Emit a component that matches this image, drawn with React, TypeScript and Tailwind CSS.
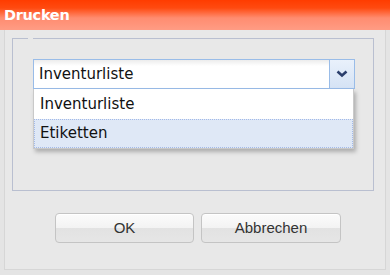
import React from "react";

export default function App() {
  return (
    <div className="w-[390px] h-[275px] bg-[#e4e4e4] overflow-hidden relative">
      {/* Title bar */}
      <div className="h-[30px] bg-[linear-gradient(to_bottom,#ff3c00_0px,#ff4a10_8px,#ff8c70_18px,#ff9c84_30px)] flex items-center pl-[4px] pt-[1px]">
        <span className="text-white font-bold text-[14.5px] leading-none font-['DejaVu_Sans',sans-serif] tracking-[-0.3px]">
          Drucken
        </span>
      </div>

      {/* Window body */}
      <div className="mx-[4px] h-[240px] border-l border-r border-b border-[#d6d6d6] bg-[#e8e8e8]">
        <div className="pt-[8px] pl-[7px] pr-[11px]">
          <fieldset className="h-[153px] border border-[#b9bfd0]">
            <legend className="ml-[15px] w-[5px] h-0" />
            <div className="relative mt-[20px] ml-[20px]">
              {/* Combo box */}
              <div className="flex h-[30px] w-[322px] border border-[#99bce8] bg-[linear-gradient(to_bottom,#ececec_0px,#ffffff_6px,#ffffff_100%)]">
                <div className="flex-1 flex items-center pl-[5px] font-['DejaVu_Sans',sans-serif] text-[15px] text-[#111]">
                  Inventurliste
                </div>
                <div className="w-[25px] border-l border-[#99bce8] bg-[linear-gradient(to_bottom,#e9f1fb,#d5e3f5)] flex items-center justify-center">
                  <svg width="12" height="8" viewBox="0 0 12 8">
                    <path d="M1.5 1.5 L6 5.5 L10.5 1.5" fill="none" stroke="#2b3f6c" strokeWidth="2.6" />
                  </svg>
                </div>
              </div>

              {/* Dropdown list */}
              <div className="absolute left-0 top-[30px] w-[321px] bg-white border-l border-r border-b border-[#c9c9c9] shadow-[2px_3px_4px_rgba(0,0,0,0.25)] font-['DejaVu_Sans',sans-serif] text-[15px] text-[#111]">
                <div className="h-[30px] flex items-center pl-[5px] border border-transparent">Inventurliste</div>
                <div className="h-[29px] flex items-center pl-[5px] bg-[#dfe8f6] border border-dotted border-[#a3bae9]">Etiketten</div>
              </div>
            </div>
          </fieldset>
        </div>

        {/* Buttons */}
        <div className="flex gap-[7px] pl-[50px] mt-[22px]">
          <button className="w-[139px] h-[30px] rounded-[4px] border border-[#c4c4c4] bg-[linear-gradient(to_bottom,#fbfbfb_0%,#f3f3f3_50%,#e2e2e2_51%,#e6e6e6_100%)] shadow-[inset_0_1px_0_#ffffff] font-['Liberation_Sans',sans-serif] text-[15px] text-[#333]">
            OK
          </button>
          <button className="w-[140px] h-[30px] rounded-[4px] border border-[#c4c4c4] bg-[linear-gradient(to_bottom,#fbfbfb_0%,#f3f3f3_50%,#e2e2e2_51%,#e6e6e6_100%)] shadow-[inset_0_1px_0_#ffffff] font-['Liberation_Sans',sans-serif] text-[15px] text-[#333]">
            Abbrechen
          </button>
        </div>
      </div>
    </div>
  );
}
